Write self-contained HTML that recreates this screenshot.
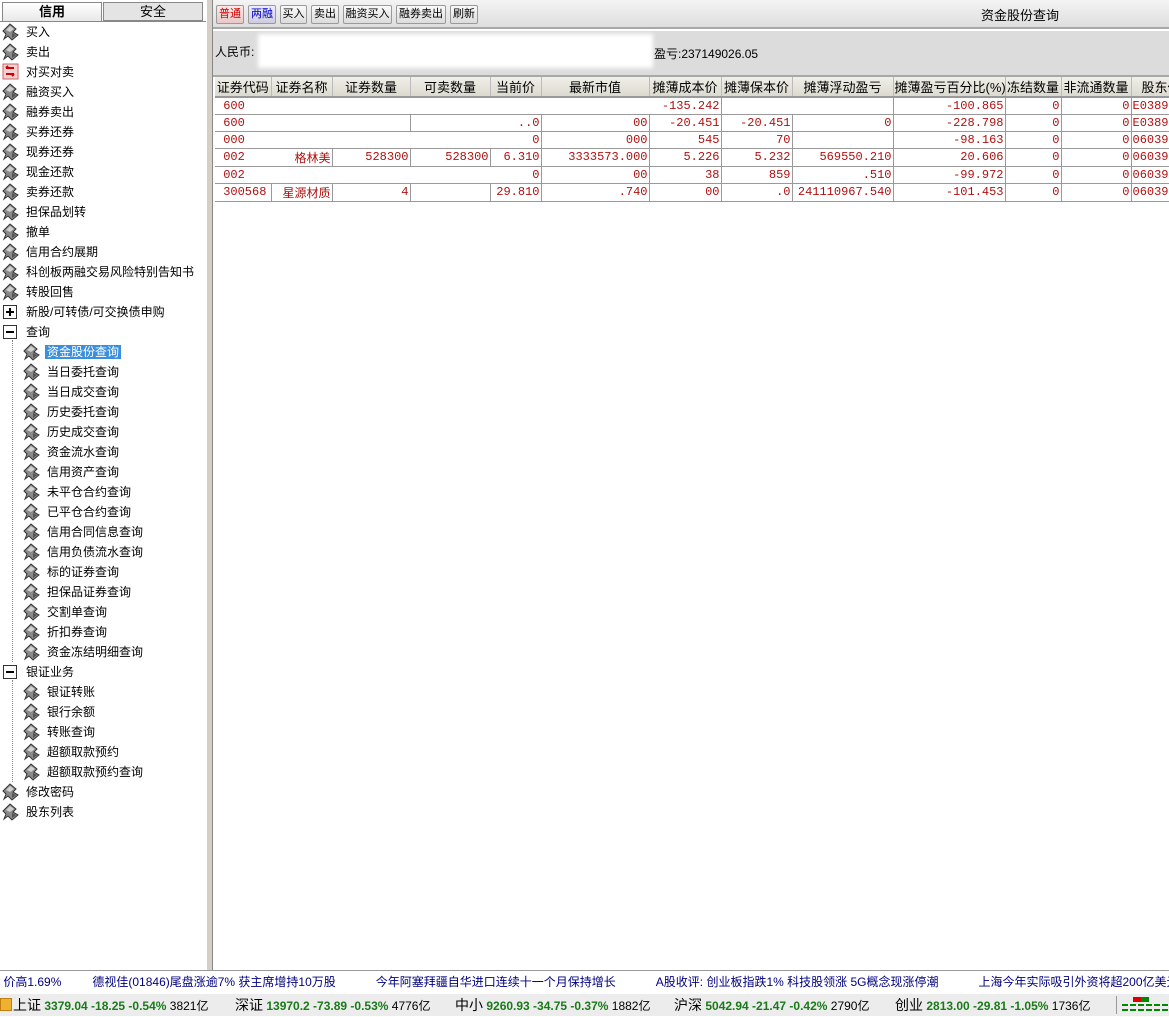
<!DOCTYPE html>
<html><head><meta charset="utf-8">
<style>
*{margin:0;padding:0;box-sizing:border-box}
body{width:1169px;height:1016px;overflow:hidden;background:#fff;font-family:"Liberation Sans","Noto Sans CJK SC","WenQuanYi Zen Hei",sans-serif;font-size:12px;color:#000;position:relative}
.abs{position:absolute}
#left{left:0;top:0;width:207px;height:970px;background:#fff}
.tabs{position:absolute;left:0;top:2px;width:206px;height:20px}
.tab{position:absolute;top:0;height:19px;border:1px solid #888;text-align:center;line-height:17px;font-size:13px}
.it{position:absolute;height:20px;line-height:20px;font-size:12px;white-space:nowrap}
.ic{position:absolute;width:18px;height:18px}
.sel{background:#3b8fdc;color:#fff;padding:0 2px}
#split{left:207px;top:0;width:6px;height:970px;background:#d4d0c8;border-right:1px solid #888}
#tb{left:213px;top:0;width:956px;height:29px;background:linear-gradient(#f4f4f4,#dedede);border-bottom:2px solid #a8a8a8}
.btn{position:absolute;top:5px;height:19px;border:1px solid #9a9a9a;border-radius:2px;background:linear-gradient(#fafafa,#dcdcdc);font-size:11px;line-height:17px;text-align:center}
#info{left:213px;top:31px;width:956px;height:46px;background:#dcdcdc;border-bottom:2px solid #a8a8a8}
table{position:absolute;left:215px;top:77px;border-collapse:collapse;table-layout:fixed;width:976px}
td,th{height:17px;font-size:12px;white-space:nowrap;overflow:hidden;padding:0 1px}
th{font-weight:normal;background:linear-gradient(#f0efe8,#dcdad0);border-right:1px solid #bbb;border-bottom:2px solid #999;text-align:center;height:18px;font-size:13px}
td{color:#b01010;text-align:right;border-right:1px solid #999;border-bottom:1px solid #999;font-family:"Liberation Mono","Noto Sans CJK SC",monospace;font-size:12px}
td.c{text-align:left}
td.w{border-right-color:#fff}
#tick{left:0;top:970px;width:1169px;height:24px;border-top:1px solid #999;background:#fff;line-height:23px;font-size:12px;color:#000080;white-space:nowrap}
#st{left:0;top:994px;width:1169px;height:22px;background:#ececec;line-height:22px;font-size:12px;white-space:nowrap}
#st .grp{position:absolute;top:0}
#st .n{font-size:14px}
.g{color:#1a7a1a;font-weight:bold;font-size:12px}
</style></head><body>
<svg width="0" height="0" style="position:absolute"><defs>
<g id="d"><path d="M8 1 L14 6 L11 9 L16 12 L10 17 L6 13 L2 16 L4 11 L1 8 Z" fill="#8a8a8a" stroke="#333" stroke-width="1"/><path d="M8 3 L12 6 L8 9 L4 7Z" fill="#d0d0d0"/><path d="M10 10 L14 12 L10 15Z" fill="#555"/></g>
</defs></svg>

<div id="left" class="abs">
<div class="tabs">
<div class="tab" style="left:2px;width:100px;background:linear-gradient(#fff,#e8e8e8);font-weight:bold;border-bottom:none">信用</div>
<div class="tab" style="left:103px;width:100px;background:#e4e4e4">安全</div>
</div>
<div class="abs" style="left:0;top:21px;width:206px;height:1px;background:#888"></div>

<svg class="ic" style="left:2px;top:23px"><use href="#d"/></svg><div class="it" style="left:26px;top:22px">买入</div>
<svg class="ic" style="left:2px;top:43px"><use href="#d"/></svg><div class="it" style="left:26px;top:42px">卖出</div>
<svg class="ic" style="left:2px;top:63px"><rect x="1" y="1" width="15" height="15" fill="#f0d0d0" stroke="#c66"/><path d="M4 5h8M4 5l2-2M12 11H4M12 11l-2 2" stroke="#c00" stroke-width="2" fill="none"/></svg><div class="it" style="left:26px;top:62px">对买对卖</div>
<svg class="ic" style="left:2px;top:83px"><use href="#d"/></svg><div class="it" style="left:26px;top:82px">融资买入</div>
<svg class="ic" style="left:2px;top:103px"><use href="#d"/></svg><div class="it" style="left:26px;top:102px">融券卖出</div>
<svg class="ic" style="left:2px;top:123px"><use href="#d"/></svg><div class="it" style="left:26px;top:122px">买券还券</div>
<svg class="ic" style="left:2px;top:143px"><use href="#d"/></svg><div class="it" style="left:26px;top:142px">现券还券</div>
<svg class="ic" style="left:2px;top:163px"><use href="#d"/></svg><div class="it" style="left:26px;top:162px">现金还款</div>
<svg class="ic" style="left:2px;top:183px"><use href="#d"/></svg><div class="it" style="left:26px;top:182px">卖券还款</div>
<svg class="ic" style="left:2px;top:203px"><use href="#d"/></svg><div class="it" style="left:26px;top:202px">担保品划转</div>
<svg class="ic" style="left:2px;top:223px"><use href="#d"/></svg><div class="it" style="left:26px;top:222px">撤单</div>
<svg class="ic" style="left:2px;top:243px"><use href="#d"/></svg><div class="it" style="left:26px;top:242px">信用合约展期</div>
<svg class="ic" style="left:2px;top:263px"><use href="#d"/></svg><div class="it" style="left:26px;top:262px">科创板两融交易风险特别告知书</div>
<svg class="ic" style="left:2px;top:283px"><use href="#d"/></svg><div class="it" style="left:26px;top:282px">转股回售</div>
<svg class="ic" style="left:2px;top:304px"><rect x="1.5" y="1.5" width="13" height="13" fill="#fff" stroke="#333"/><path d="M4 8h8M8 4v8" stroke="#000" stroke-width="2"/></svg><div class="it" style="left:26px;top:302px">新股/可转债/可交换债申购</div>
<svg class="ic" style="left:2px;top:324px"><rect x="1.5" y="1.5" width="13" height="13" fill="#fff" stroke="#333"/><path d="M4 8h8" stroke="#000" stroke-width="2"/></svg><div class="it" style="left:26px;top:322px">查询</div>
<div class="abs" style="left:12px;top:340px;height:322px;border-left:1px dotted #888"></div>
<svg class="ic" style="left:23px;top:343px"><use href="#d"/></svg><div class="it" style="left:45px;top:342px"><span class="sel">资金股份查询</span></div>
<svg class="ic" style="left:23px;top:363px"><use href="#d"/></svg><div class="it" style="left:47px;top:362px">当日委托查询</div>
<svg class="ic" style="left:23px;top:383px"><use href="#d"/></svg><div class="it" style="left:47px;top:382px">当日成交查询</div>
<svg class="ic" style="left:23px;top:403px"><use href="#d"/></svg><div class="it" style="left:47px;top:402px">历史委托查询</div>
<svg class="ic" style="left:23px;top:423px"><use href="#d"/></svg><div class="it" style="left:47px;top:422px">历史成交查询</div>
<svg class="ic" style="left:23px;top:443px"><use href="#d"/></svg><div class="it" style="left:47px;top:442px">资金流水查询</div>
<svg class="ic" style="left:23px;top:463px"><use href="#d"/></svg><div class="it" style="left:47px;top:462px">信用资产查询</div>
<svg class="ic" style="left:23px;top:483px"><use href="#d"/></svg><div class="it" style="left:47px;top:482px">未平仓合约查询</div>
<svg class="ic" style="left:23px;top:503px"><use href="#d"/></svg><div class="it" style="left:47px;top:502px">已平仓合约查询</div>
<svg class="ic" style="left:23px;top:523px"><use href="#d"/></svg><div class="it" style="left:47px;top:522px">信用合同信息查询</div>
<svg class="ic" style="left:23px;top:543px"><use href="#d"/></svg><div class="it" style="left:47px;top:542px">信用负债流水查询</div>
<svg class="ic" style="left:23px;top:563px"><use href="#d"/></svg><div class="it" style="left:47px;top:562px">标的证券查询</div>
<svg class="ic" style="left:23px;top:583px"><use href="#d"/></svg><div class="it" style="left:47px;top:582px">担保品证券查询</div>
<svg class="ic" style="left:23px;top:603px"><use href="#d"/></svg><div class="it" style="left:47px;top:602px">交割单查询</div>
<svg class="ic" style="left:23px;top:623px"><use href="#d"/></svg><div class="it" style="left:47px;top:622px">折扣券查询</div>
<svg class="ic" style="left:23px;top:643px"><use href="#d"/></svg><div class="it" style="left:47px;top:642px">资金冻结明细查询</div>
<svg class="ic" style="left:2px;top:664px"><rect x="1.5" y="1.5" width="13" height="13" fill="#fff" stroke="#333"/><path d="M4 8h8" stroke="#000" stroke-width="2"/></svg><div class="it" style="left:26px;top:662px">银证业务</div>
<div class="abs" style="left:12px;top:680px;height:102px;border-left:1px dotted #888"></div>
<svg class="ic" style="left:23px;top:683px"><use href="#d"/></svg><div class="it" style="left:47px;top:682px">银证转账</div>
<svg class="ic" style="left:23px;top:703px"><use href="#d"/></svg><div class="it" style="left:47px;top:702px">银行余额</div>
<svg class="ic" style="left:23px;top:723px"><use href="#d"/></svg><div class="it" style="left:47px;top:722px">转账查询</div>
<svg class="ic" style="left:23px;top:743px"><use href="#d"/></svg><div class="it" style="left:47px;top:742px">超额取款预约</div>
<svg class="ic" style="left:23px;top:763px"><use href="#d"/></svg><div class="it" style="left:47px;top:762px">超额取款预约查询</div>
<svg class="ic" style="left:2px;top:783px"><use href="#d"/></svg><div class="it" style="left:26px;top:782px">修改密码</div>
<svg class="ic" style="left:2px;top:803px"><use href="#d"/></svg><div class="it" style="left:26px;top:802px">股东列表</div>
</div>
<div id="split" class="abs"></div>

<div id="tb" class="abs">
<div class="btn" style="left:3px;width:28px;color:#d00000;background:linear-gradient(#fde8e8,#e8c8c8)">普通</div>
<div class="btn" style="left:35px;width:28px;color:#0000c0;background:linear-gradient(#eef,#ccd)">两融</div>
<div class="btn" style="left:67px;width:27px">买入</div>
<div class="btn" style="left:98px;width:28px">卖出</div>
<div class="btn" style="left:130px;width:49px">融资买入</div>
<div class="btn" style="left:183px;width:50px">融券卖出</div>
<div class="btn" style="left:237px;width:28px">刷新</div>
<div class="abs" style="left:768px;top:5px;font-size:13px">资金股份查询</div>
</div>

<div id="info" class="abs">
<div class="abs" style="left:2px;top:12px;font-size:12px">人民币:</div>
<div class="abs" style="left:45px;top:3px;width:395px;height:34px;background:#fff;filter:blur(2px)"></div>
<div class="abs" style="left:441px;top:14px;font-size:12px">盈亏:237149026.05</div>
</div>

<table>
<colgroup><col style="width:56px"><col style="width:61px"><col style="width:78px"><col style="width:80px"><col style="width:51px"><col style="width:108px"><col style="width:72px"><col style="width:71px"><col style="width:101px"><col style="width:112px"><col style="width:56px"><col style="width:70px"><col style="width:60px"></colgroup>
<tr><th>证券代码</th><th>证券名称</th><th>证券数量</th><th>可卖数量</th><th>当前价</th><th>最新市值</th><th>摊薄成本价</th><th>摊薄保本价</th><th>摊薄浮动盈亏</th><th>摊薄盈亏百分比(%)</th><th>冻结数量</th><th>非流通数量</th><th>股东代</th></tr>
<tr><td class="c w">&nbsp;600</td><td class="w"></td><td class="w"></td><td class="w"></td><td class="w"></td><td class="w"></td><td>-135.242</td><td class="w"></td><td></td><td>-100.865</td><td>0</td><td>0</td><td class="c">E0389</td></tr>
<tr><td class="c w">&nbsp;600</td><td class="w"></td><td></td><td class="w"></td><td>..0</td><td>00</td><td>-20.451</td><td>-20.451</td><td>0</td><td>-228.798</td><td>0</td><td>0</td><td class="c">E0389</td></tr>
<tr><td class="c w">&nbsp;000</td><td class="w"></td><td class="w"></td><td class="w"></td><td>0</td><td>000</td><td>545</td><td>70</td><td></td><td>-98.163</td><td>0</td><td>0</td><td class="c">06039</td></tr>
<tr><td class="c w">&nbsp;002</td><td>格林美</td><td>528300</td><td>528300</td><td>6.310</td><td>3333573.000</td><td>5.226</td><td>5.232</td><td>569550.210</td><td>20.606</td><td>0</td><td>0</td><td class="c">06039</td></tr>
<tr><td class="c w">&nbsp;002</td><td class="w"></td><td class="w"></td><td class="w"></td><td>0</td><td>00</td><td>38</td><td>859</td><td>.510</td><td>-99.972</td><td>0</td><td>0</td><td class="c">06039</td></tr>
<tr><td class="c">&nbsp;300568</td><td>星源材质</td><td>4</td><td></td><td>29.810</td><td>.740</td><td>00</td><td>.0</td><td>241110967.540</td><td>-101.453</td><td>0</td><td>0</td><td class="c">06039</td></tr>
</table>

<div id="tick" class="abs">&nbsp;<span style="color:#000080">价高1.69%</span><span style="margin-left:31px">德视佳(01846)尾盘涨逾7% 获主席增持10万股</span><span style="margin-left:40px">今年阿塞拜疆自华进口连续十一个月保持增长</span><span style="margin-left:40px">A股收评: 创业板指跌1% 科技股领涨 5G概念现涨停潮</span><span style="margin-left:40px">上海今年实际吸引外资将超200亿美元</span></div>

<div id="st" class="abs">
<span class="abs" style="left:0;top:4px;width:12px;height:13px;background:#f0b030;border:1px solid #c08010"></span>
<span class="grp" style="left:13px"><span class="n">上证</span> <span class="g">3379.04 -18.25 -0.54%</span> 3821亿</span>
<span class="grp" style="left:235px"><span class="n">深证</span> <span class="g">13970.2 -73.89 -0.53%</span> 4776亿</span>
<span class="grp" style="left:455px"><span class="n">中小</span> <span class="g">9260.93 -34.75 -0.37%</span> 1882亿</span>
<span class="grp" style="left:674px"><span class="n">沪深</span> <span class="g">5042.94 -21.47 -0.42%</span> 2790亿</span>
<span class="grp" style="left:895px"><span class="n">创业</span> <span class="g">2813.00 -29.81 -1.05%</span> 1736亿</span>
<div class="abs" style="left:1116px;top:2px;width:1px;height:18px;background:#999"></div>
<div class="abs" style="left:1133px;top:3px;width:8px;height:5px;background:#d00"></div>
<div class="abs" style="left:1141px;top:3px;width:8px;height:5px;background:#080"></div>
<div class="abs" style="left:1122px;top:10px;width:46px;height:2px;background:repeating-linear-gradient(90deg,#080 0 6px,transparent 6px 8px)"></div>
<div class="abs" style="left:1122px;top:15px;width:46px;height:2px;background:repeating-linear-gradient(90deg,#080 0 6px,transparent 6px 8px)"></div>
</div>
</body></html>
